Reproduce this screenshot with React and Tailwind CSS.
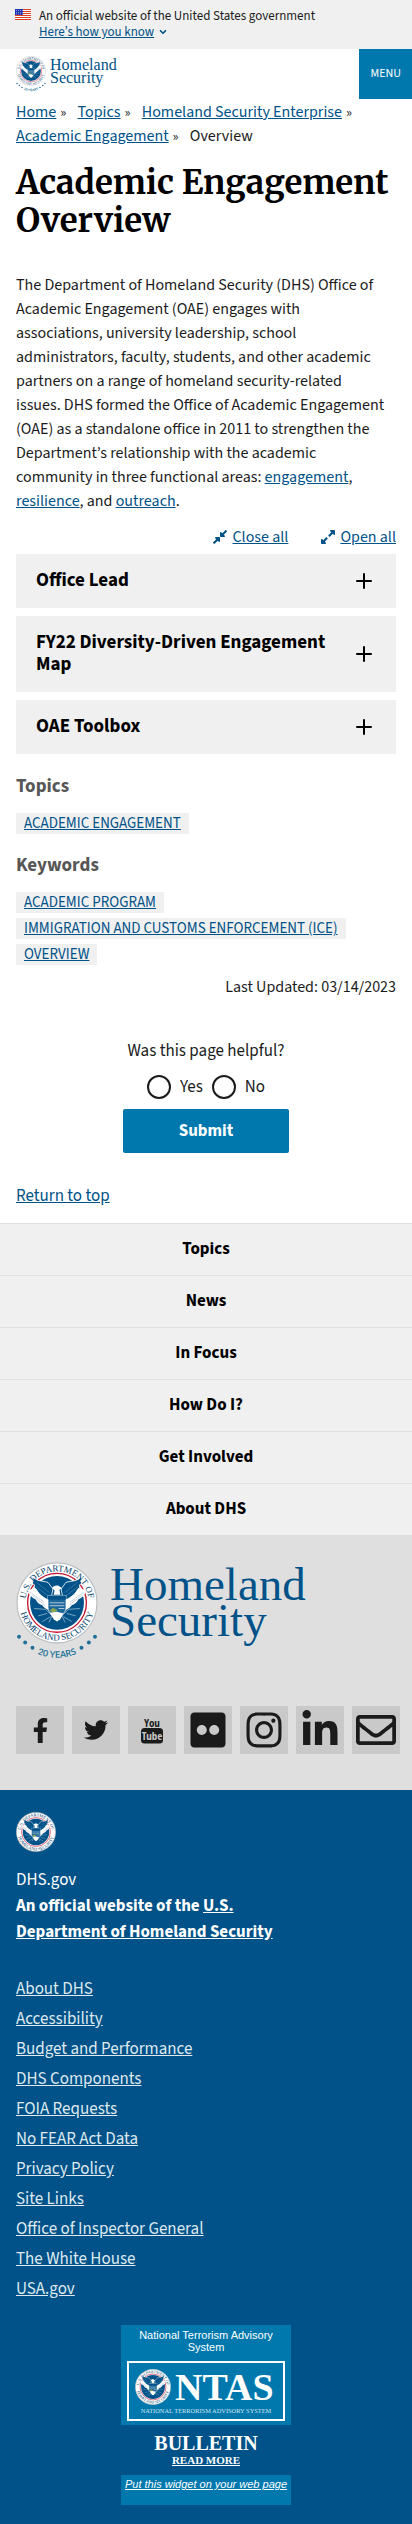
import { ChevronDown, Plus } from "lucide-react";
import {
  FaCompressAlt,
  FaExpandAlt,
  FaFacebookF,
  FaFlickr,
  FaInstagram,
  FaLinkedinIn,
  FaRegEnvelope,
  FaTwitter,
} from "react-icons/fa";

const link = "text-[#005288] underline";

function Seal({ id, className, anniversary }) {
  return (
    <svg
      viewBox={anniversary ? "0 0 100 120" : "0 0 100 100"}
      className={className}
      role="img"
      aria-label="U.S. Department of Homeland Security seal"
    >
      <defs>
        <path id={id + "-top"} d="M13.2 62 A38.7 38.7 0 1 1 86.8 62" />
        <path id={id + "-bottom"} d="M4.5 42 A46.2 46.2 0 1 0 95.5 42" />
        <path id={id + "-years"} d="M2 96 A65 65 0 0 0 98 96" />
        <g id={id + "-wing"}>
          <path
            d="M14 35 L24 31 C29 39 35 43 42 46 L42 60 C36 58 33 55 32 53 C28 52 25 49 24 46 C19 44 16 40 14 35Z"
            fill="#fff"
          />
          <path
            d="M20 18 C25 24 33 23 39 25 L45 33 L42 48 C34 44 28 40 25 34 L22 31 L22.500 28 L19.500 26 L21 23.500Z"
            fill="#005288"
            stroke="#fff"
            strokeWidth="1"
          />
          <path d="M17 37 L34 49 M20 41 L35 53" stroke="#a9bfd0" strokeWidth="0.8" />
          <path d="M25 25 L40 37 M24 30 L40 42" stroke="#5a8fb5" strokeWidth="0.7" />
          <path
            d="M22 57 L36 58 L44 66 L40 74 M27 66 L38 63 M32 73 L42 67"
            stroke="#7fa6c2"
            strokeWidth="1.2"
            fill="none"
          />
        </g>
      </defs>
      <circle cx="50" cy="50" r="49" fill="#fff" stroke="#b9bdc1" strokeWidth="1.4" />
      <circle cx="50" cy="50" r="36" fill="#fff" stroke="#c4122f" strokeWidth="1.6" />
      <circle cx="50" cy="50" r="33" fill="#005288" />
      <use href={"#" + id + "-wing"} />
      <use href={"#" + id + "-wing"} transform="translate(100 0) scale(-1 1)" />
      <path d="M44 32 C45 29 49 28 52 29 L56 32 L53 34 L54 40 L46 40 L47 35Z" fill="#fff" />
      <path
        d="M39 41 H61 V56 C61 62 55 66 50 68 C45 66 39 62 39 56Z"
        fill="#1d6699"
        stroke="#fff"
        strokeWidth="0.9"
      />
      <path d="M39 46 H61 V41 H39Z" fill="#005288" />
      <path d="M41 50 H59 M41 53.500 H59 M52 57 H59" stroke="#cfe0ec" strokeWidth="1" />
      <path d="M41 60 L45 56 L51 59 L46 62Z" fill="#8aa84a" />
      <path d="M41 62 L50 61 L58 63 L54 70 L50 73 L46 70Z" fill="#fff" />
      <text
        fontSize="11"
        fill="#003e6b"
        textAnchor="middle"
        fontFamily="'Liberation Serif', serif"
      >
        <textPath href={"#" + id + "-top"} startOffset="50%">
          U.S. DEPARTMENT OF
        </textPath>
      </text>
      <text
        fontSize="11"
        fill="#003e6b"
        textAnchor="middle"
        fontFamily="'Liberation Serif', serif"
      >
        <textPath href={"#" + id + "-bottom"} startOffset="50%">
          HOMELAND SECURITY
        </textPath>
      </text>
      {anniversary && (
        <>
          <text
            fontSize="11"
            fontWeight="700"
            fill="#2f7a9c"
            textAnchor="middle"
            fontFamily="Lato, sans-serif"
          >
            <textPath href={"#" + id + "-years"} startOffset="50%">
              20 YEARS
            </textPath>
          </text>
          <g fill="#1f6f98">
            <circle cx="3.500" cy="91.500" r="2.400" />
            <circle cx="11" cy="98.500" r="2.400" />
            <circle cx="20" cy="105" r="2.400" />
            <circle cx="80" cy="105" r="2.400" />
            <circle cx="89" cy="98.500" r="2.400" />
            <circle cx="96.500" cy="91.500" r="2.400" />
          </g>
        </>
      )}
    </svg>
  );
}

function Flag() {
  return (
    <svg viewBox="0 0 16 11" className="mt-px h-[11px] w-4 shrink-0" role="img" aria-label="U.S. flag">
      <rect width="16" height="11" fill="#fff" />
      <path
        d="M0 .5H16M0 2.500H16M0 4.500H16M0 6.500H16M0 8.500H16M0 10.500H16"
        stroke="#db3e1f"
        strokeWidth="1"
      />
      <rect width="8" height="6" fill="#1e33b1" />
      <path d="M1 1.500H8M1 3.500H8M1 5H8" stroke="#fff" strokeWidth=".6" strokeDasharray=".8 1.200" />
    </svg>
  );
}

function YouTubeMark() {
  return (
    <svg viewBox="0 0 22 28" className="h-7 w-[22px] overflow-visible" fill="#1b1b1b" aria-hidden="true">
      <text
        x="11"
        y="10.500"
        fontSize="11"
        fontWeight="700"
        textAnchor="middle"
        fontFamily="'Open Sans Condensed', 'Liberation Sans Narrow', sans-serif"
      >
        You
      </text>
      <rect y="12" width="22" height="15.500" rx="3.500" />
      <text
        x="11"
        y="24"
        fontSize="11"
        fontWeight="700"
        fill="#c9c9c9"
        textAnchor="middle"
        fontFamily="'Open Sans Condensed', 'Liberation Sans Narrow', sans-serif"
      >
        Tube
      </text>
    </svg>
  );
}

function Crumb({ children }) {
  return (
    <li className="inline">
      <a href="#" className={link}>
        {children}
      </a>
      <span className="mr-2 ml-1 text-sm">»</span>{" "}
    </li>
  );
}

function TagList({ title, tags }) {
  return (
    <section>
      <h2 className="text-[19px] leading-6 font-bold text-[#575757]">{title}</h2>
      <ul className="mt-[14px] flex flex-col items-start gap-[5px]">
        {tags.map((tag) => (
          <li key={tag} className="bg-[#f0f0f0] px-2 text-[15px] leading-[21px]">
            <a href="#" className={link}>
              {tag}
            </a>
          </li>
        ))}
      </ul>
    </section>
  );
}

const accordion = ["Office Lead", "FY22 Diversity-Driven Engagement Map", "OAE Toolbox"];
const sections = ["Topics", "News", "In Focus", "How Do I?", "Get Involved", "About DHS"];
const socials = [
  ["Facebook", <FaFacebookF className="size-[25px]" />],
  ["Twitter", <FaTwitter className="size-6" />],
  ["YouTube", <YouTubeMark />],
  ["Flickr", <FaFlickr className="size-10" />],
  ["Instagram", <FaInstagram className="size-10" />],
  ["LinkedIn", <FaLinkedinIn className="size-10" />],
  ["Email", <FaRegEnvelope className="size-10" />],
];
const footerLinks = [
  "About DHS",
  "Accessibility",
  "Budget and Performance",
  "DHS Components",
  "FOIA Requests",
  "No FEAR Act Data",
  "Privacy Policy",
  "Site Links",
  "Office of Inspector General",
  "The White House",
  "USA.gov",
];

export default function App() {
  return (
    <div className="bg-white font-['Source_Sans_3','Noto_Sans_CJK_SC',sans-serif] text-base leading-6 text-[#1b1b1b]">
      <section className="flex gap-2 bg-[#f0f0f0] px-[15px] pt-2 pb-[9px] text-[13px] leading-4">
        <Flag />
        <div>
          <p>An official website of the United States government</p>
          <button type="button" className="flex items-center gap-1 text-[#005288]">
            <span className="underline">Here’s how you know</span>
            <ChevronDown size={10} strokeWidth={4} />
          </button>
        </div>
      </section>

      <header className="flex h-[50px] justify-between">
        <a href="#" className="flex gap-1 pt-[7px] pl-4">
          <Seal id="header-seal" className="h-9 w-[30px]" anniversary />
          <span className="pt-[2px] font-['Liberation_Serif',serif] text-base leading-[13px] text-[#005288]">
            <span className="block">Homeland</span>
            <span className="block">Security</span>
          </span>
        </a>
        <button type="button" className="bg-[#0078ae] px-[11px] text-xs text-white">
          MENU
        </button>
      </header>

      <main className="px-4">
        <nav aria-label="Breadcrumb" className="pt-px">
          <ol>
            <Crumb>Home</Crumb>
            <Crumb>Topics</Crumb>
            <Crumb>Homeland Security Enterprise</Crumb>
            <Crumb>Academic Engagement</Crumb>
            <li className="inline">Overview</li>
          </ol>
        </nav>

        <h1 className="mt-4 font-['Merriweather','Noto_Serif',serif] text-[33px] leading-[38px] font-bold text-black">
          Academic Engagement Overview
        </h1>

        <p className="mt-[33px] pr-[10px]">
          The Department of Homeland Security (DHS) Office of Academic Engagement (OAE) engages with
          associations, university leadership, school administrators, faculty, students, and other
          academic partners on a range of homeland security-related issues. DHS formed the Office of
          Academic Engagement (OAE) as a standalone office in 2011 to strengthen the Department’s
          relationship with the academic community in three functional areas:{" "}
          <a href="#" className={link}>
            engagement
          </a>
          ,{" "}
          <a href="#" className={link}>
            resilience
          </a>
          , and{" "}
          <a href="#" className={link}>
            outreach
          </a>
          .
        </p>

        <div className="mt-3 flex justify-end gap-8 text-[#005288]">
          <button type="button" className="flex items-center gap-1">
            <FaCompressAlt className="size-4" />
            <span className="underline">Close all</span>
          </button>
          <button type="button" className="flex items-center gap-1">
            <FaExpandAlt className="size-4" />
            <span className="underline">Open all</span>
          </button>
        </div>

        <div className="mt-[5px] flex flex-col gap-2">
          {accordion.map((title) => (
            <h2 key={title}>
              <button
                type="button"
                className="flex w-full items-center justify-between gap-3 bg-[#f0f0f0] px-5 py-4 text-left text-[19px] leading-[22px] font-bold text-black"
              >
                {title}
                <Plus size={24} strokeWidth={2} className="-my-1 shrink-0" />
              </button>
            </h2>
          ))}
        </div>

        <div className="mt-[21px] flex flex-col gap-5">
          <TagList title="Topics" tags={["ACADEMIC ENGAGEMENT"]} />
          <TagList
            title="Keywords"
            tags={["ACADEMIC PROGRAM", "IMMIGRATION AND CUSTOMS ENFORCEMENT (ICE)", "OVERVIEW"]}
          />
        </div>

        <p className="mt-[10px] text-right">Last Updated: 03/14/2023</p>

        <form className="mt-10 flex flex-col items-center text-[17px]" onSubmit={(e) => e.preventDefault()}>
          <fieldset className="flex flex-col items-center">
            <legend className="mx-auto">Was this page helpful?</legend>
            <div className="mt-3 flex gap-[9px]">
              {["Yes", "No"].map((answer) => (
                <label key={answer} className="flex items-center gap-[9px]">
                  <input
                    type="radio"
                    name="helpful"
                    value={answer}
                    className="size-6 appearance-none rounded-full border-2 border-[#1b1b1b] checked:bg-[#005288]"
                  />
                  {answer}
                </label>
              ))}
            </div>
          </fieldset>
          <button
            type="submit"
            className="mt-[10px] h-11 w-[166px] rounded-xs bg-[#0078ae] font-bold text-white"
          >
            Submit
          </button>
        </form>

        <a href="#" className={"mt-[31px] mb-[15px] block w-fit text-[17px] " + link}>
          Return to top
        </a>
      </main>

      <footer>
        <nav aria-label="Footer">
          <ul>
            {sections.map((name) => (
              <li key={name} className="border-t border-[#dfe1e2] bg-[#f0f0f0]">
                <a
                  href="#"
                  className="block py-4 text-center text-[17px] leading-[19px] font-bold text-black"
                >
                  {name}
                </a>
              </li>
            ))}
          </ul>
        </nav>

        <section className="bg-[#dfdfdf] pt-[27px] pr-3 pb-9 pl-4">
          <a href="#" className="flex gap-3">
            <Seal id="logo-seal" className="h-[98px] w-[82px] shrink-0 overflow-visible" anniversary />
            <span className="pt-1 font-['Liberation_Serif',serif] text-[47px] leading-9 text-[#005288]">
              <span className="block">Homeland</span>
              <span className="block">Security</span>
            </span>
          </a>
          <ul className="mt-[46px] flex gap-2">
            {socials.map(([name, icon]) => (
              <li key={name}>
                <a
                  href="#"
                  aria-label={name}
                  className="flex size-12 items-center justify-center bg-[#c9c9c9]"
                >
                  {icon}
                </a>
              </li>
            ))}
          </ul>
        </section>

        <section className="bg-[#005288] px-4 pt-[22px] pb-5 text-[17px] text-white">
          <Seal id="footer-seal" className="size-10" />
          <p className="mt-[15px] leading-[26px]">DHS.gov</p>
          <p className="max-w-[280px] leading-[26px] font-bold">
            An official website of the{" "}
            <a href="#" className="underline">
              U.S. Department of Homeland Security
            </a>
          </p>
          <ul className="mt-[29px] leading-[30px] text-[#dfe9f0]">
            {footerLinks.map((name) => (
              <li key={name}>
                <a href="#" className="underline">
                  {name}
                </a>
              </li>
            ))}
          </ul>

          <aside className="mx-auto mt-[21px] w-[170px] text-center font-['Liberation_Sans',sans-serif] text-[11px] leading-3">
            <div className="bg-[#0078ae] px-[6px] pt-1 pb-1">
              <p>National Terrorism Advisory System</p>
              <a href="#" className="mt-2 block border-2 border-white px-[6px] pt-[6px] pb-1">
                <span className="flex items-center gap-1">
                  <Seal id="ntas-seal" className="size-9 shrink-0" />
                  <span className="font-['Liberation_Serif',serif] text-[38px] leading-9 font-bold">
                    NTAS
                  </span>
                </span>
                <svg viewBox="0 0 144 10" className="h-[10px] w-full" aria-hidden="true">
                  <text
                    x="72"
                    y="8"
                    fontSize="6.500"
                    fill="#cfe6f3"
                    textAnchor="middle"
                    fontFamily="'Liberation Serif', serif"
                  >
                    NATIONAL TERRORISM ADVISORY SYSTEM
                  </text>
                </svg>
              </a>
            </div>
            <a href="#" className="block py-2 font-['Liberation_Serif',serif] font-bold">
              <span className="block text-xl leading-5">BULLETIN</span>
              <span className="block text-[11px] leading-[14px] underline">READ MORE</span>
            </a>
            <div className="bg-[#0078ae] pt-[3px] pb-[15px]">
              <a href="#" className="whitespace-nowrap italic underline">
                Put this widget on your web page
              </a>
            </div>
          </aside>
        </section>
      </footer>
    </div>
  );
}
